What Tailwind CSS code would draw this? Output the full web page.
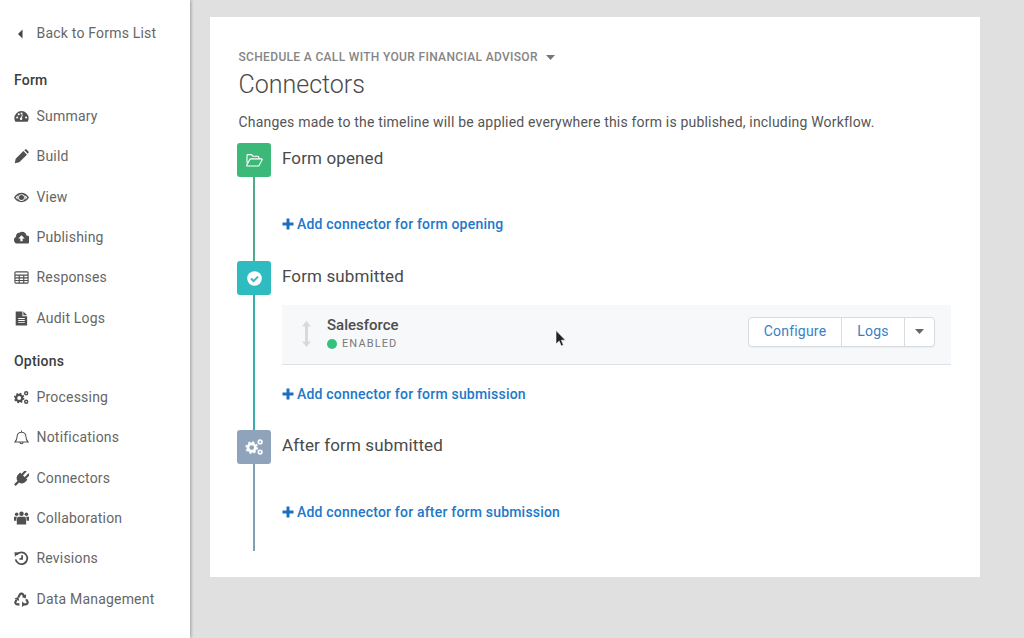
<!DOCTYPE html>
<html lang="en"><head><meta charset="utf-8"><title>Connectors</title>
<script src="https://cdn.jsdelivr.net/npm/@tailwindcss/browser@4"></script></head>
<body class="bg-[#dfe0df] font-['Roboto',sans-serif]">
<div class="relative flex w-[1024px] h-[638px] overflow-hidden bg-[#dfe0df]">
<aside class="w-[190px] h-full shrink-0 bg-white pt-[13px] text-[14px] tracking-[0.2px] text-[#666] shadow-[1px_0_3px_rgba(0,0,0,0.3)]">
  <a class="flex items-center h-10 pl-[14px]"><span class="w-[22.500px] flex"><svg class="ml-[3px] mt-[1px]" width="7" height="10" viewBox="0 0 6 10" fill="#444"><path d="M5 .5v9L.5 5z"/></svg></span>Back to Forms List</a>
  <h2 class="flex items-center h-6 pl-[14px] mt-[15px] mb-[4.150px] font-medium text-[#3d3d3d]">Form</h2>
  <a class="flex items-center h-[40.4px] pl-[14px]"><span class="w-[22.500px]"><svg class="block" width="15" height="15" viewBox="0 0 16 16" fill="#505050"><path d="M8 2.200a7.600 7.600 0 0 0-7.600 7.600c0 1.400.4 2.800 1.100 3.900h13c.7-1.100 1.100-2.500 1.100-3.900A7.600 7.600 0 0 0 8 2.200zM3.400 10.200a1.100 1.100 0 1 1 0-2.200 1.100 1.100 0 0 1 0 2.200zm1.700-3.400a1.100 1.100 0 1 1 0-2.200 1.100 1.100 0 0 1 0 2.200zm2.900-1a1.100 1.100 0 1 1 0-2.200 1.100 1.100 0 0 1 0 2.200zm-.9 6a1.600 1.600 0 0 1 .4-3l1.200-3.200.9.3-1.200 3.200a1.600 1.600 0 0 1-1.300 2.700zm5.800-1.600a1.100 1.100 0 1 1 0-2.200 1.100 1.100 0 0 1 0 2.200z" fill-rule="evenodd"/></svg></span>Summary</a>
  <a class="flex items-center h-[40.4px] pl-[14px]"><span class="w-[22.500px]"><svg class="block" width="15" height="15" viewBox="0 0 16 16" fill="#505050"><path d="M.8 15.200l1-4.800L10 2.200l3.800 3.800-8.200 8.200zM11 1.300l.9-.8c.5-.4 1.100-.3 1.500.1l2 2c.4.400.5 1 .1 1.500l-.8.9z"/></svg></span>Build</a>
  <a class="flex items-center h-[40.4px] pl-[14px]"><span class="w-[22.500px]"><svg class="block" width="15" height="15" viewBox="0 0 16 16" fill="#505050"><path fill-rule="evenodd" d="M0 8C1.900 5 4.700 3 8 3s6.100 2 8 5c-1.900 3-4.700 5-8 5S1.900 11 0 8zm8 3.600a3.600 3.600 0 1 0 0-7.200 3.600 3.600 0 0 0 0 7.200zM1.700 8c.8 1 1.800 1.900 2.900 2.500a4.600 4.600 0 0 1 0-5C3.500 6.100 2.500 7 1.700 8zm9.700 2.500c1.100-.6 2.100-1.500 2.900-2.500-.8-1-1.800-1.900-2.900-2.500a4.600 4.600 0 0 1 0 5z"/><circle cx="8" cy="8" r="2.700"/></svg></span>View</a>
  <a class="flex items-center h-[40.4px] pl-[14px]"><span class="w-[22.500px]"><svg class="block" width="15" height="15" viewBox="0 0 16 16" fill="#505050"><path fill-rule="evenodd" d="M3.800 14.500A3.800 3.800 0 0 1 2.300 7.200 3.300 3.300 0 0 1 5.800 3a4.600 4.600 0 0 1 7.500 2.800 3.200 3.200 0 0 1-.4 8.700zM8 5.500 4.600 9h2.200v3h2.400V9h2.200z"/></svg></span>Publishing</a>
  <a class="flex items-center h-[40.4px] pl-[14px]"><span class="w-[22.500px]"><svg class="block" width="15" height="15" viewBox="0 0 16 16" fill="none" stroke="#505050" stroke-width="1.200"><rect x="1" y="2" width="14" height="12" rx="1"/><path d="M1 5.500h14M1 8.400h14M1 11.200h14M5.600 5.500V14M10.400 5.500V14"/></svg></span>Responses</a>
  <a class="flex items-center h-[40.4px] pl-[14px]"><span class="w-[22.500px]"><svg class="block" width="15" height="15" viewBox="0 0 16 16" fill="#505050"><path fill-rule="evenodd" d="M1.800 .5H9v5h5V15.500H1.800zM10 .5l4 4h-4zM4.500 7.500v1h7v-1zm0 2.200v1h7v-1zm0 2.200v1h7v-1z"/></svg></span>Audit Logs</a>
  <h2 class="flex items-center h-6 pl-[14px] mt-[11.150px] mb-[3.500px] font-medium text-[#3d3d3d]">Options</h2>
  <a class="flex items-center h-[40.4px] pl-[14px]"><span class="w-[22.500px]"><svg class="block" width="15" height="15" viewBox="0 0 16 16" fill="none" stroke="#505050"><circle cx="5.500" cy="8.500" r="3.300" stroke-width="2.400"/><circle cx="5.500" cy="8.500" r="4.800" stroke-width="1.600" stroke-dasharray="1.900 1.860"/><circle cx="13" cy="3.500" r="1.600" stroke-width="1.500"/><circle cx="13" cy="12.500" r="1.600" stroke-width="1.500"/></svg></span>Processing</a>
  <a class="flex items-center h-[40.4px] pl-[14px]"><span class="w-[22.500px]"><svg class="block" width="15" height="15" viewBox="0 0 16 16" fill="none" stroke="#505050" stroke-width="1.100"><path d="M1 12.800c1.500-1.300 2.300-2.500 2.300-5.800a4.700 4.700 0 0 1 9.400 0c0 3.300.8 4.500 2.300 5.800zM6.300 13a1.700 1.700 0 0 0 3.400 0M8 .6v1.600"/></svg></span>Notifications</a>
  <a class="flex items-center h-[40.4px] pl-[14px]"><span class="w-[22.500px]"><svg class="block" width="15" height="15" viewBox="0 0 16 16" fill="#505050"><g transform="rotate(45 8 8)"><rect x="4.400" y="-1.500" width="2.300" height="6.500" rx="1.100"/><rect x="9.300" y="-1.500" width="2.300" height="6.500" rx="1.100"/><path d="M2.500 4.500h11v3c0 3-2 5-4.300 5.300V18H6.800v-5.200C4.500 12.500 2.500 10.500 2.500 7.500z"/></g></svg></span>Connectors</a>
  <a class="flex items-center h-[40.4px] pl-[14px]"><span class="w-[22.500px]"><svg class="block" width="15" height="15" viewBox="0 0 16 16" fill="#505050"><circle cx="2.800" cy="3.400" r="1.900"/><circle cx="8" cy="2.900" r="2.400"/><circle cx="13.200" cy="3.400" r="1.900"/><path d="M0 6.200h3.200c-.5.900-.6 2-.6 4.300H0zM16 6.200h-3.200c.5.900.6 2 .6 4.300H16zM4 6h8c.7 1 1 3 1 8.500H3C3 9 3.300 7 4 6z"/></svg></span>Collaboration</a>
  <a class="flex items-center h-[40.4px] pl-[14px]"><span class="w-[22.500px]"><svg class="block" width="15" height="15" viewBox="0 0 16 16" fill="none" stroke="#505050" stroke-width="1.900"><path d="M2.800 4a6.300 6.300 0 1 1-1.100 5M8.600 4.500v4H5.800"/><path fill="#505050" stroke="none" d="M.5 1.400l5 .2-4.500 4.500z"/></svg></span>Revisions</a>
  <a class="flex items-center h-[40.4px] pl-[14px]"><span class="w-[22.500px]"><svg class="block" width="15" height="15" viewBox="0 0 16 16" fill="none" stroke="#505050" stroke-width="2.300"><path d="M4.500 5.800 6.300 2.600c.7-1.100 2.600-1.100 3.300 0l1.300 2.200M13 7.800l1.300 2.400c.7 1.400-.2 3-1.800 3H10M5.800 13.200H3.500c-1.600 0-2.500-1.600-1.800-3l1-1.800"/><path fill="#505050" stroke="none" d="M13 2.400l-.5 4.500-4.200-1.700zM8.600 9.800l3.300 3.400-3.300 2.800zM.4 6.800l4.300-1.600.8 4.500z"/></svg></span>Data Management</a>
</aside>
<main class="flex-1 pl-5 pt-[17px]">
  <section class="w-[770px] h-[560px] bg-white pt-[31px] pl-[27px] pr-[29px]">
    <div class="pl-[2px] text-[#555] -ml-[0.500px]">
      <div class="flex items-center gap-[8px] h-[18px] text-[12px] font-medium uppercase text-[#858585] tracking-[0.33px]">Schedule a call with your financial advisor <svg width="9" height="5" viewBox="0 0 9 5" fill="#777"><path d="M0 0h9L4.500 5z"/></svg></div>
      <h1 class="h-[35px] mt-[1.500px] flex items-center text-[25px] font-light text-[#4a4a4a]">Connectors</h1>
      <p class="h-[20px] mt-[9.500px] flex items-center text-[14px] tracking-[0.19px] text-[#555] whitespace-nowrap">Changes made to the timeline will be applied everywhere this form is published, including Workflow.</p>
    </div>
    <div class="mt-[11px] flex flex-col">
      <div class="flex h-[118px]">
        <div class="w-[34px] flex flex-col items-center">
          <span class="w-[34px] h-[34px] rounded-[3px] bg-[#3cb878] flex items-center justify-center"><svg width="19" height="17" viewBox="0 0 19 17" fill="none" stroke="#fff" stroke-width="1.100"><path d="M2 11V3.500C2 3 2.400 2.600 3 2.600h3.500l1.400 1.600h5c.5 0 .9.4.9 1v1.600"/><path d="M2.200 14h11.600l3.300-6.300c.2-.4 0-.8-.5-.8H5.700c-.4 0-.7.2-.9.6L1.700 13.200c-.2.4 0 .8.500.8z"/></svg></span>
          <span class="w-[2px] flex-1 bg-[#4fa98f]"></span>
        </div>
        <div class="flex-1 pl-[11px]">
          <h3 class="h-[30px] pt-[1px] flex items-center text-[17px] tracking-[0.12px] text-[#4a4a4a]">Form opened</h3>
          <a class="mt-[38px] h-[26px] flex items-center gap-[3px] text-[14px] font-medium tracking-[0.2px] text-[#2178c9]"><svg width="12" height="12" viewBox="0 0 12 12" fill="#1f6fc0"><path d="M4.500.5h3v4h4v3h-4v4h-3v-4h-4v-3h4z"/></svg>Add connector for form opening</a>
        </div>
      </div>
      <div class="flex h-[169px]">
        <div class="w-[34px] flex flex-col items-center">
          <span class="w-[34px] h-[34px] rounded-[3px] bg-[#2fbcc0] flex items-center justify-center"><svg width="15" height="15" viewBox="0 0 15 15"><circle cx="7.500" cy="7.500" r="7.300" fill="#fff"/><path d="M4 7.500l2.600 2.600L11 5.600" fill="none" stroke="#2fbcc0" stroke-width="2"/></svg></span>
          <span class="w-[2px] flex-1 bg-[#35b0ae]"></span>
        </div>
        <div class="flex-1 pl-[11px]">
          <h3 class="h-[30px] pt-[1px] flex items-center text-[17px] tracking-[0.12px] text-[#4a4a4a]">Form submitted</h3>
          <div class="mt-[14px] h-[60px] flex items-center border-b border-[#dfe3e8] bg-[#f6f8fa] pl-[19px] pr-[16px]">
            <svg class="mr-[15px] mt-[-1px]" width="11" height="28" viewBox="0 0 11 28" fill="#d9d9d9"><path d="M5.500 1 10 6.500H7V21.500h3L5.500 27 1 21.500h3V6.500H1z"/></svg>
            <div class="flex-1">
              <div class="h-[19px] -mt-[1px] flex items-center text-[15px] font-medium text-[#4d4d4d]">Salesforce</div>
              <div class="h-[17px] mt-[1px] flex items-center gap-[5px] text-[11px] tracking-[1.1px] text-[#7a7a7a]"><span class="w-[10px] h-[10px] rounded-full bg-[#35c07d]"></span>ENABLED</div>
            </div>
            <div class="flex h-[30px] mb-[6px] rounded-[4px] border border-[#d8dce0] bg-white text-[14px] tracking-[0.2px] text-[#3a7fc4] shadow-[0_1px_1px_rgba(0,0,0,0.05)]">
              <span class="w-[93px] flex items-center justify-center border-r border-[#d8dce0]">Configure</span>
              <span class="w-[63px] flex items-center justify-center border-r border-[#d8dce0]">Logs</span>
              <span class="w-[29px] flex items-center justify-center"><svg width="9" height="5" viewBox="0 0 9 5" fill="#666"><path d="M0 0h9L4.500 5z"/></svg></span>
            </div>
          </div>
          <a class="mt-[16px] h-[26px] flex items-center gap-[3px] text-[14px] font-medium tracking-[0.2px] text-[#2178c9]"><svg width="12" height="12" viewBox="0 0 12 12" fill="#1f6fc0"><path d="M4.500.5h3v4h4v3h-4v4h-3v-4h-4v-3h4z"/></svg>Add connector for form submission</a>
        </div>
      </div>
      <div class="flex h-[121px]">
        <div class="w-[34px] flex flex-col items-center">
          <span class="w-[34px] h-[34px] rounded-[3px] bg-[#8fa3bb] flex items-center justify-center"><svg width="19" height="18" viewBox="0 0 16 16" fill="none" stroke="#fff"><circle cx="5.500" cy="8.500" r="3.300" stroke-width="2.400"/><circle cx="5.500" cy="8.500" r="4.800" stroke-width="1.600" stroke-dasharray="1.900 1.860"/><circle cx="13" cy="3.500" r="1.600" stroke-width="1.500"/><circle cx="13" cy="12.500" r="1.600" stroke-width="1.500"/></svg></span>
          <span class="w-[2px] flex-1 bg-[#7f9fb5]"></span>
        </div>
        <div class="flex-1 pl-[11px]">
          <h3 class="h-[30px] pt-[1px] flex items-center text-[17px] tracking-[0.12px] text-[#4a4a4a]">After form submitted</h3>
          <a class="mt-[39px] h-[26px] flex items-center gap-[3px] text-[14px] font-medium tracking-[0.2px] text-[#2178c9]"><svg width="12" height="12" viewBox="0 0 12 12" fill="#1f6fc0"><path d="M4.500.5h3v4h4v3h-4v4h-3v-4h-4v-3h4z"/></svg>Add connector for after form submission</a>
        </div>
      </div>
    </div>
  </section>
</main>
<svg class="absolute left-[555px] top-[330px]" width="12" height="18" viewBox="0 0 12 18"><path d="M1 0.500V14l3.200-3 2 5 2.200-1-2-4.800H10.500z" fill="#222" stroke="#fff" stroke-width=".6"/></svg>
</div>
</body></html>
